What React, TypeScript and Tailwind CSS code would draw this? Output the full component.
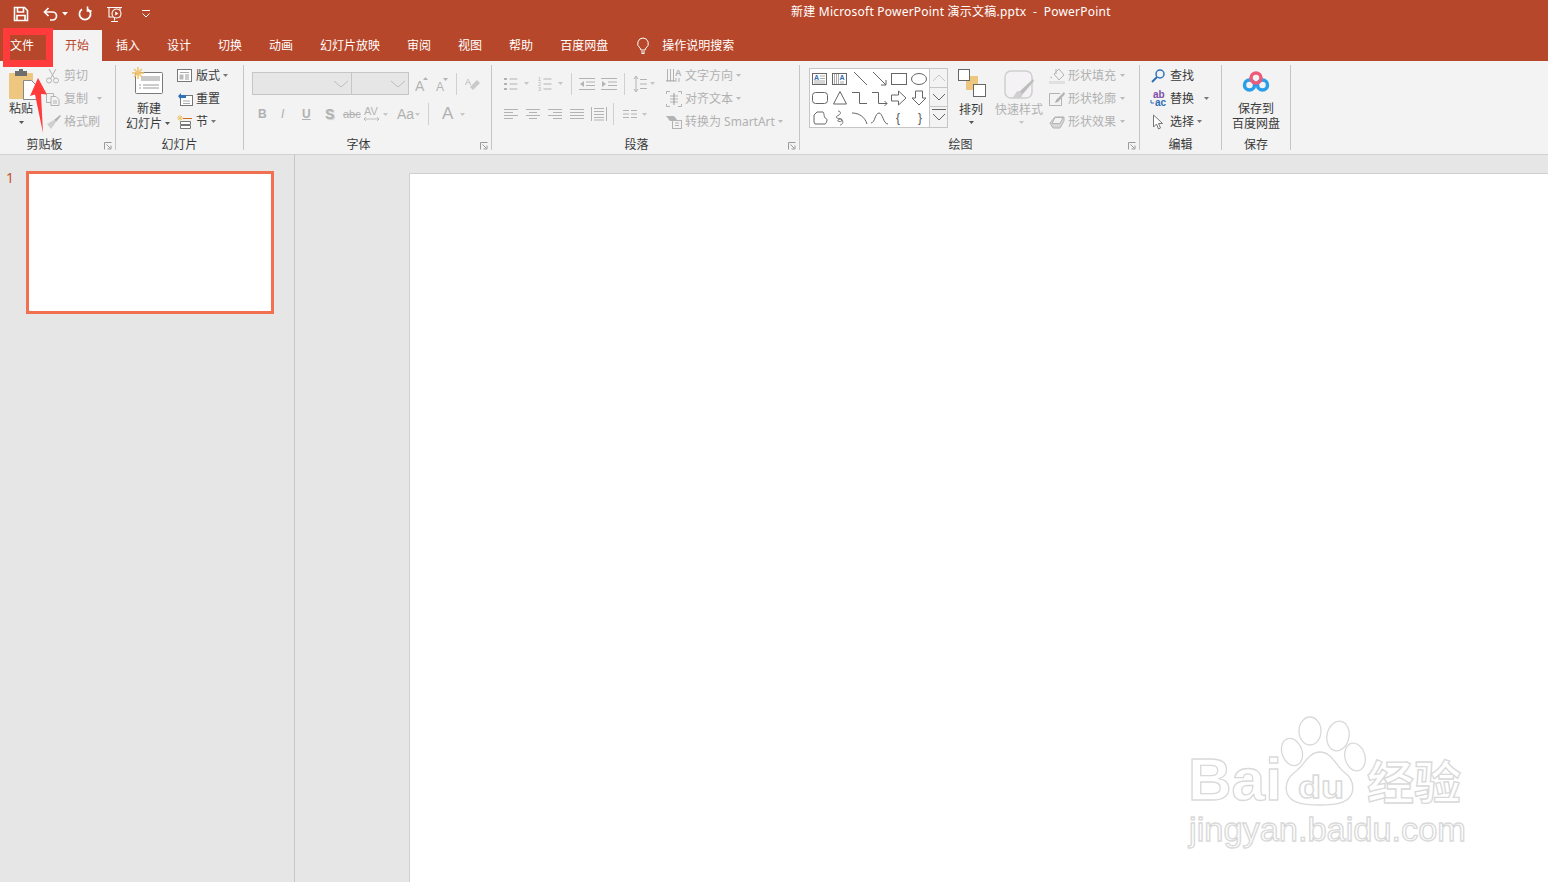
import React from "react";

const G = "#b3b3b3";

function S({ w = 16, h = 16, children, className = "" }: { w?: number; h?: number; children: React.ReactNode; className?: string }) {
  return (
    <svg width={w} height={h} viewBox={`0 0 ${w} ${h}`} fill="none" className={`shrink-0 ${className}`}>
      {children}
    </svg>
  );
}

function Caret({ color = "#777" }: { color?: string }) {
  return (
    <S w={5} h={3}>
      <path d="M0 0h5L2.5 3z" fill={color} />
    </S>
  );
}

function Launcher() {
  return (
    <svg width="8" height="8" viewBox="0 0 8 8" fill="none" className="absolute right-[3px] bottom-[0px]">
      <path d="M.5 7.5v-7h7M2.5 2.5l4 4M7 3.5V7H3.5" stroke="#9a9a9a" strokeWidth="1" />
    </svg>
  );
}

function Group({ w, label, launcher, labelPad = 0, children }: { w: number; label: string; launcher?: boolean; labelPad?: number; children: React.ReactNode }) {
  return (
    <div className="relative flex h-[85px] flex-col border-r border-[#c6c6c6]" style={{ width: w }}>
      <div className="flex h-[73px]">{children}</div>
      <div className="h-[12px] text-center text-[12px] leading-[13px] text-[#3a3a3a]" style={{ paddingRight: labelPad }}>{label}</div>
      {launcher && <Launcher />}
    </div>
  );
}

function SmallRow({ icon, text, caret, muted, gap = 3, caretGap = 3, iconW = 16 }: { icon: React.ReactNode; text: string; caret?: boolean; muted?: boolean; gap?: number; caretGap?: number; iconW?: number }) {
  return (
    <div className={`flex h-[21px] items-center text-[12px] leading-[21px] ${muted ? "text-[#b1b1b1]" : "text-[#3a3a3a]"}`}>
      <div className="flex justify-center" style={{ width: iconW, marginRight: gap }}>{icon}</div>
      <span className="whitespace-nowrap">{text}</span>
      {caret && <div className="flex" style={{ marginLeft: caretGap }}><Caret color={muted ? "#bbb" : "#777"} /></div>}
    </div>
  );
}

function Rows({ children, className = "" }: { children: React.ReactNode; className?: string }) {
  return <div className={`flex flex-col gap-[2px] ${className}`}>{children}</div>;
}

function Sep({ h = 22 }: { h?: number }) {
  return <div className="w-px shrink-0 bg-[#d0d0d0]" style={{ height: h }} />;
}

function Lines({ kind }: { kind: "l" | "c" | "r" | "j" }) {
  const rows = kind === "l" ? [[0, 14], [0, 9], [0, 14], [0, 9]] : kind === "c" ? [[0, 14], [3, 11], [0, 14], [3, 11]] : kind === "r" ? [[0, 14], [5, 14], [0, 14], [5, 14]] : [[0, 14], [0, 14], [0, 14], [0, 14]];
  return (
    <S w={14} h={12}>
      {rows.map((r, i) => (
        <path key={i} d={`M${r[0]} ${1.5 + i * 3}H${r[1]}`} stroke={G} />
      ))}
    </S>
  );
}

const shapes: React.ReactNode[] = [
  <g key="a"><rect x="2.5" y="4.5" width="14" height="11" stroke="#666" /><text x="4" y="10.500" fontSize="7" fontWeight="700" fill="#2f6db5" fontFamily="Liberation Sans">A</text><path d="M10 7h5M10 9.500h5M4 12h11M4 14h11" stroke="#888" strokeWidth=".7" /></g>,
  <g key="b"><rect x="2.5" y="4.5" width="14" height="11" stroke="#666" /><text x="9.500" y="11" fontSize="7" fontWeight="700" fill="#2f6db5" fontFamily="Liberation Sans">A</text><path d="M4.500 5v10M6.500 5v10M8.500 5v10M11 12v3M13 12v3" stroke="#888" strokeWidth=".7" /></g>,
  <path key="c" d="M4 3l13 13" stroke="#666" />,
  <path key="d" d="M3 3l13 13M11 16h5v-5" stroke="#666" />,
  <rect key="e" x="2.500" y="4.500" width="15" height="11" stroke="#666" />,
  <ellipse key="f" cx="10" cy="10" rx="7.500" ry="5.500" stroke="#666" />,
  <rect key="g" x="2.500" y="4.500" width="15" height="11" rx="3" stroke="#666" />,
  <path key="h" d="M10 3.500l6.500 12.500h-13z" stroke="#666" />,
  <path key="i" d="M2 4.500h7.500V15.500H17" stroke="#666" />,
  <path key="j" d="M2 4.500h6.500v11H17M14.500 13l2.500 2.500-2.500 2.500" stroke="#666" />,
  <path key="k" d="M2.500 7h7V3l7.500 7-7.500 7v-4h-7z" stroke="#666" />,
  <path key="l" d="M6.500 3h7v7h3.500l-7 7-7-7h3.500z" stroke="#666" />,
  <path key="m" d="M4 7l3-3h6c1 0 1 5 2 6 1 0 2 1 2 2s-1 4-2 4H5l-1-2z" stroke="#666" />,
  <path key="n" d="M8 3c3 0 3 3 1 4S5 9 7 10s5 0 5 2-3 2-4 1 2-3 4-1 0 5-2 5" stroke="#666" strokeWidth=".9" />,
  <path key="o" d="M2 5c7 0 13 4 15 11" stroke="#666" />,
  <path key="p" d="M1 15c4 0 4-10 8-10s4 11 9 11" stroke="#666" />,
  <text key="q" x="7" y="14" fontSize="12" fill="#555" fontFamily="Liberation Sans">{"{"}</text>,
  <text key="r" x="9" y="14" fontSize="12" fill="#555" fontFamily="Liberation Sans">{"}"}</text>,
];

function Gallery() {
  return (
    <div className="flex h-[60px] w-[139px] border border-[#c6c6c6] bg-white">
      <div className="grid h-full w-[120px] grid-cols-6 grid-rows-3">
        {shapes.map((s, i) => (
          <S key={i} w={20} h={20}>{s}</S>
        ))}
      </div>
      <div className="flex w-[18px] flex-col border-l border-[#c6c6c6] bg-[#f3f3f3]">
        <div className="flex h-[19px] items-center justify-center border-b border-[#c6c6c6]">
          <S w={14} h={8}><path d="M1 7l6-6 6 6" stroke="#c6c6c6" /></S>
        </div>
        <div className="flex h-[19px] items-center justify-center border-b border-[#c6c6c6]">
          <S w={14} h={8}><path d="M1 1l6 6 6-6" stroke="#666" /></S>
        </div>
        <div className="flex flex-1 flex-col items-center pt-[2px]">
          <S w={14} h={14}><path d="M0 .5h14M1 5l6 6 6-6" stroke="#666" /></S>
        </div>
      </div>
    </div>
  );
}

function Watermark() {
  const cls = { fill: "#fff", stroke: "#d9d9d9", strokeWidth: 1.3 };
  return (
    <svg width="310" height="150" viewBox="0 0 310 150" className="pointer-events-none absolute right-[68px] bottom-[22px]">
      <text x="18" y="90" fontSize="60" fontWeight="700" fontFamily="Liberation Sans" lengthAdjust="spacingAndGlyphs" textLength="94" {...cls}>Bai</text>
      <ellipse cx="140" cy="21" rx="11" ry="14" {...cls} />
      <ellipse cx="168" cy="26" rx="11" ry="15" transform="rotate(12 168 26)" {...cls} />
      <ellipse cx="122" cy="42" rx="10" ry="14" transform="rotate(-20 122 42)" {...cls} />
      <ellipse cx="185" cy="47" rx="10" ry="14" transform="rotate(-15 185 47)" {...cls} />
      <path d="M150 42c12 0 16 14 24 20 8 6 10 14 8 21-3 9-13 12-32 12-20 0-30-3-33-12-2-7 0-15 8-21 9-6 13-20 25-20z" {...cls} />
      <text x="128" y="88" fontSize="32" fontWeight="700" fontFamily="Liberation Sans" lengthAdjust="spacingAndGlyphs" textLength="46" {...cls}>du</text>
      <text x="197" y="89" fontSize="46" fontWeight="700" fontFamily="Noto Sans CJK SC" lengthAdjust="spacingAndGlyphs" textLength="94" {...cls}>经验</text>
      <text x="19" y="131" fontSize="33" fontFamily="Liberation Sans" lengthAdjust="spacingAndGlyphs" textLength="277" {...cls}>jingyan.baidu.com</text>
    </svg>
  );
}

const tabs = ["插入", "设计", "切换", "动画", "幻灯片放映", "审阅", "视图", "帮助", "百度网盘"];

function Num() {
  return (
    <S w={16} h={14}>
      {[2, 7, 12].map((y, i) => (
        <g key={y}>
          <text x="1" y={y + 2} fontSize="5.500" fill={G} fontFamily="Liberation Sans">{i + 1}</text>
          <path d={`M6.500 ${y}h8`} stroke={G} />
        </g>
      ))}
    </S>
  );
}

export default function App() {
  return (
    <div className="relative flex h-screen w-full flex-col overflow-hidden bg-[#e6e6e6] font-['Noto_Sans','Noto_Sans_CJK_SC',sans-serif] text-[12px]">
      {/* title bar */}
      <div className="flex h-[30px] shrink-0 items-center bg-[#b7472a] pl-[13px] text-white">
        <S w={16} h={16} className="mr-[14px] -mt-[3px]">
          <path d="M1.500 1.500h10l3 3v10h-13z" stroke="#fff" strokeWidth="1.600" />
          <path d="M4.500 2v4h6V2M4 14.500V9.500h8v5" stroke="#fff" strokeWidth="1.600" />
        </S>
        <S w={16} h={14} className="mr-[3px] -mt-[3px]">
          <path d="M5.500 1L1.500 5l4 4" stroke="#fff" strokeWidth="1.700" />
          <path d="M2 5h7.500a4 4 0 0 1 4 4 4 4 0 0 1-4 4H7" stroke="#fff" strokeWidth="1.700" />
        </S>
        <S w={6} h={4} className="mr-[10px] -mt-[2px]"><path d="M0 0h6L3 3.500z" fill="#fff" /></S>
        <S w={14} h={15} className="mr-[14px] -mt-[3px]">
          <path d="M4 3.200a5.600 5.600 0 1 0 6 0" stroke="#fff" strokeWidth="1.700" />
          <path d="M9.500 .5v4.500h4.200" stroke="#fff" strokeWidth="1.600" />
        </S>
        <S w={18} h={18} className="mr-[17px] -mt-[2px]">
          <path d="M1 2.500h15M3 3v9h11V3M8.500 12v3.500M5 16.500h7" stroke="#fff" strokeWidth="1.100" />
          <circle cx="10.500" cy="8.500" r="4.500" fill="#b7472a" stroke="#fff" strokeWidth="1.100" />
          <path d="M9.200 6.500v4l3.200-2z" fill="#fff" />
        </S>
        <S w={10} h={8} className="-mt-[2px]"><path d="M1 .5h8M1.500 3.500L5 7l3.500-3.500" stroke="#fff" /></S>
        <div className="ml-[640px] -mt-[6px] whitespace-pre text-[12px] leading-[20px] tracking-[0.22px]">新建 Microsoft PowerPoint 演示文稿.pptx  -  PowerPoint</div>
      </div>

      {/* tabs */}
      <div className="flex h-[31px] shrink-0 items-center bg-[#b7472a] text-[12px] text-white">
        <div className="w-[52px] pl-[10px]">文件</div>
        <div className="mr-[14px] flex h-full w-[50px] items-center justify-center bg-[#f3f3f3] text-[#b7472a]">开始</div>
        <div className="flex items-center gap-[27px]">
          {tabs.map((t) => (
            <span key={t} className="whitespace-nowrap">{t}</span>
          ))}
        </div>
        <S w={14} h={17} className="ml-[28px]">
          <path d="M7 1a5.500 5.500 0 0 0-3 10c.6.6.7 1.400.8 2h4.400c.1-.6.2-1.400.8-2A5.500 5.500 0 0 0 7 1z" stroke="#fff" />
          <path d="M5 15h4M5.500 16.500h3" stroke="#fff" />
        </S>
        <span className="ml-[12px]">操作说明搜索</span>
      </div>

      {/* ribbon */}
      <div className="flex h-[94px] shrink-0 border-b border-[#d2d2d2] bg-[#f3f3f3] pt-[4px]">
        <Group w={116} label="剪贴板" launcher labelPad={26}>
          <div className="flex w-[42px] flex-col items-center pt-[3px] text-[#3a3a3a]">
            <svg width="28" height="32" viewBox="0 0 28 32" fill="none" className="ml-[4px] shrink-0">
              <rect x="0" y="5" width="24" height="26" rx="1" fill="#edc67f" />
              <path d="M6 3h12v5H6z" fill="#6e6e6e" />
              <path d="M10 1h4v3h-4z" fill="#6e6e6e" />
              <path d="M14.500 12.500h8l5 5v14h-13z" fill="#fff" stroke="#888" />
            </svg>
            <div className="mt-[1px] leading-[16px]">粘贴</div>
            <div className="mt-[4px]"><Caret color="#555" /></div>
          </div>
          <Rows className="ml-[3px]">
            <SmallRow muted text="剪切" icon={
              <S><circle cx="4" cy="12.500" r="2.500" stroke={G} /><circle cx="11" cy="12.500" r="2.500" stroke={G} /><path d="M5.500 10.500L11 1M9.500 10.500L4 1" stroke={G} /></S>
            } />
            <SmallRow muted text="复制" caret caretGap={9} icon={
              <S><path d="M1.500 2.500h7v9h-7z" stroke={G} /><path d="M6 5.500h5l3 3v6H6z" fill="#f3f3f3" stroke={G} /><path d="M8 10h4M8 12h4" stroke={G} /></S>
            } />
            <SmallRow muted text="格式刷" icon={
              <S><path d="M15 1L9 6l2 2 5-6z" fill={G} /><path d="M9 6L2 10l4 5 5-7z" fill="#cfcfcf" /></S>
            } />
          </Rows>
        </Group>

        <Group w={128} label="幻灯片">
          <div className="flex w-[47px] flex-col items-center pl-[19px] pt-[2px] text-[#3a3a3a]">
            <svg width="32" height="28" viewBox="0 0 32 28" fill="none" className="-ml-[2px] shrink-0">
              <rect x="3.500" y="5.500" width="27" height="21" rx="1" fill="#fff" stroke="#7a7a7a" />
              <path d="M9 9h19v5H9z" fill="#c9c9c9" />
              <path d="M7 18h2M11 18h16M7 21h2M11 21h16" stroke="#9a9a9a" />
              <path d="M6 0v12M0 6h12M2 2l8 8M10 2l-8 8" stroke="#efc26d" strokeWidth="1.500" />
            </svg>
            <div className="mt-[6px] whitespace-nowrap leading-[15px]">新建</div>
            <div className="-ml-[2px] flex items-center whitespace-nowrap leading-[15px]">幻灯片<span className="ml-[3px]"><Caret color="#555" /></span></div>
          </div>
          <Rows className="ml-[14px]">
            <SmallRow text="版式" caret iconW={15} gap={4} icon={
              <S w={15} h={13}><rect x=".5" y=".5" width="14" height="12" fill="#fff" stroke="#777" /><path d="M3 3.500h9" stroke="#aaa" /><rect x="2.500" y="5.500" width="4" height="5" fill="#bbb" /><path d="M8 6h4M8 8h4M8 10h4" stroke="#999" /></S>
            } />
            <SmallRow text="重置" iconW={15} gap={4} icon={
              <S w={16} h={14}><rect x="3.500" y="3.500" width="12" height="10" fill="#fff" stroke="#777" /><path d="M6 9h7M6 11.500h7" stroke="#aaa" /><path d="M1 4l3-3v2h5v3H4v2z" fill="#2f72b8" /></S>
            } />
            <SmallRow text="节" caret iconW={15} gap={4} icon={
              <S w={15} h={14}><path d="M3 0v6M0 3h6M1 1l4 4M5 1L1 5" stroke="#efc26d" /><path d="M6 3.500h9" stroke="#d2691e" /><path d="M3.500 6.500h10v3h-10z M3.500 10.500h10v3h-10z" stroke="#777" fill="#fff" /></S>
            } />
          </Rows>
        </Group>

        <Group w={248} label="字体" launcher labelPad={18}>
          <div className="flex flex-col pl-[8px] pt-[7px]">
            <div className="flex h-[23px] items-center">
              <div className="flex h-[23px] w-[100px] items-center justify-end border border-[#c6c6c6] bg-[#e6e6e6] pr-[3px]">
                <S w={14} h={8}><path d="M0 1l7 6 7-6" stroke="#bcbcbc" /></S>
              </div>
              <div className="flex h-[23px] w-[57px] items-center justify-end border border-l-0 border-[#c6c6c6] bg-[#e6e6e6] pr-[3px]">
                <S w={14} h={8}><path d="M0 1l7 6 7-6" stroke="#bcbcbc" /></S>
              </div>
              <S w={14} h={18} className="ml-[6px]"><text x="0" y="16" fontSize="14" fill={G} fontFamily="Liberation Sans">A</text><path d="M8 5h5L10.500 2z" fill={G} /></S>
              <S w={13} h={18} className="ml-[7px]"><text x="0" y="16" fontSize="12" fill={G} fontFamily="Liberation Sans">A</text><path d="M7 3h5L9.500 6z" fill={G} /></S>
              <div className="ml-[7px]"><Sep /></div>
              <S w={16} h={18} className="ml-[8px]"><path d="M8 15l7-7-3-3-7 7z" fill="#c9c9c9" /><text x="0" y="10" fontSize="9" fill={G} fontFamily="Liberation Sans">A</text></S>
            </div>
            <div className="mt-[8px] flex h-[22px] items-center font-['Liberation_Sans',sans-serif] text-[#b1b1b1]">
              <span className="ml-[6px] w-[22px] text-[12px] font-bold">B</span>
              <span className="ml-[1px] w-[21px] text-[12px] italic">I</span>
              <span className="w-[23px] text-[12px] font-bold underline">U</span>
              <span className="w-[18px] text-[14px] font-bold [text-shadow:1px_1px_1px_#ccc]">S</span>
              <span className="w-[21px] text-[11px] line-through">abc</span>
              <S w={16} h={16}><text x="0" y="9" fontSize="11" fill={G} fontFamily="Liberation Sans">AV</text><path d="M0 13h15M2 11l-2 2 2 2M13 11l2 2-2 2" stroke={G} strokeWidth=".8" /></S>
              <div className="ml-[3px] mr-[9px]"><Caret color="#c5c5c5" /></div>
              <span className="w-[18px] text-[14px]">Aa</span>
              <div className="mr-[8px]"><Caret color="#c5c5c5" /></div>
              <Sep />
              <span className="ml-[13px] w-[18px] text-[17px]">A</span>
              <Caret color="#c5c5c5" />
            </div>
          </div>
        </Group>

        <Group w={308} label="段落" launcher labelPad={18}>
          <div className="flex w-[174px] flex-col pl-[11px] pt-[7px]">
            <div className="flex h-[23px] items-center">
              <S w={16} h={14}>{[2, 7, 12].map((y) => <g key={y}><rect x="1" y={y - 1} width="3" height="2" fill={G} /><path d={`M6.500 ${y}h8`} stroke={G} /></g>)}</S>
              <div className="ml-[5px] mr-[8px]"><Caret color="#c5c5c5" /></div>
              <Num />
              <div className="ml-[5px] mr-[8px]"><Caret color="#c5c5c5" /></div>
              <Sep />
              <S w={16} h={14} className="ml-[7px]"><path d="M0 1.500h16M7 5h9M7 8.500h9M0 12.500h16" stroke={G} /><path d="M5 4v6L1 7z" fill={G} /></S>
              <S w={16} h={14} className="ml-[6px]"><path d="M0 1.500h16M7 5h9M7 8.500h9M0 12.500h16" stroke={G} /><path d="M1 4v6l4-3z" fill={G} /></S>
              <div className="ml-[7px]"><Sep /></div>
              <S w={14} h={18} className="ml-[8px]"><path d="M3 2v14M1 4l2-3 2 3M1 14l2 3 2-3M7 4.500h7M7 9h7M7 13.500h7" stroke={G} /></S>
              <div className="ml-[3px]"><Caret color="#c5c5c5" /></div>
            </div>
            <div className="mt-[8px] flex h-[22px] items-center">
              <div className="ml-[1px]"><Lines kind="l" /></div>
              <div className="ml-[8px]"><Lines kind="c" /></div>
              <div className="ml-[8px]"><Lines kind="r" /></div>
              <div className="ml-[8px]"><Lines kind="j" /></div>
              <S w={16} h={16} className="ml-[7px]"><path d="M.5 1v14M15.500 1v14M3 2.500h10M3 5.500h10M3 8.500h10M3 11.500h10M3 14h10" stroke={G} /></S>
              <div className="ml-[6px]"><Sep /></div>
              <S w={14} h={10} className="ml-[9px]"><path d="M0 1.500h6M8 1.500h6M0 5h6M8 5h6M0 8.500h6M8 8.500h6" stroke={G} /></S>
              <div className="ml-[5px]"><Caret color="#c5c5c5" /></div>
            </div>
          </div>
          <Rows>
            <SmallRow muted text="文字方向" caret icon={
              <S><path d="M1.500 1v12M4.500 1v12M7.500 1v12M0 12l1.500 2 1.500-2M3 12l1.500 2 1.500-2M6 12l1.500 2 1.500-2" stroke={G} /><text x="9" y="8" fontSize="9" fontWeight="700" fill={G} fontFamily="Liberation Sans">A</text><path d="M10 10v4M13 10v4" stroke={G} /></S>
            } />
            <SmallRow muted text="对齐文本" caret icon={
              <S><path d="M.5 3V.500H4M12 .5h3.500V3M.5 13v2.500H4M12 15.500h3.500V13" stroke={G} /><path d="M4 5h8M4 8h8M4 11h8" stroke={G} /><path d="M8 2v12" stroke="#999" /></S>
            } />
            <SmallRow muted text="转换为 SmartArt" caret icon={
              <S><path d="M0 2h8l4 5H4z" fill={G} /><rect x="6.500" y="6.500" width="9" height="8" fill="#f3f3f3" stroke={G} /><path d="M9 9h4M9 11.500h4" stroke={G} /></S>
            } />
          </Rows>
        </Group>

        <Group w={340} label="绘图" launcher labelPad={18}>
          <div className="ml-[9px] mt-[3px]"><Gallery /></div>
          <div className="ml-[9px] flex w-[28px] flex-col items-center pt-[4px] text-[#3a3a3a]">
            <svg width="28" height="28" viewBox="0 0 28 28" fill="none" className="ml-[1px] shrink-0">
              <rect x="8" y="7" width="12" height="14" fill="#edc67f" />
              <rect x=".5" y=".5" width="11" height="11" fill="#fff" stroke="#666" />
              <rect x="15.500" y="15.500" width="12" height="12" fill="#fff" stroke="#666" />
            </svg>
            <div className="mt-[5px] whitespace-nowrap leading-[16px]">排列</div>
            <div className="mt-[3px]"><Caret color="#555" /></div>
          </div>
          <div className="ml-[9px] flex w-[50px] flex-col items-center pt-[5px] text-[#b1b1b1]">
            <svg width="30" height="29" viewBox="0 0 30 29" fill="none" className="shrink-0">
              <rect x="1" y="1" width="27" height="27" rx="6" fill="#f5f2f5" stroke="#cfcfcf" strokeWidth="1.500" />
              <path d="M29 9L15 22l3 3 12-14z" fill="#bdbdbd" />
              <path d="M14 21c-3 1-3 6-7 7h9c2-1 3-4 2-5z" fill="#cfcfcf" />
            </svg>
            <div className="mt-[3px] whitespace-nowrap leading-[16px]">快速样式</div>
            <div className="ml-[5px] mt-[3px]"><Caret color="#c5c5c5" /></div>
          </div>
          <Rows className="ml-[5px]">
            <SmallRow muted text="形状填充" caret gap={3} caretGap={4} icon={
              <S><path d="M5 6l5-5 5 6-5 5z" fill="none" stroke={G} /><path d="M7 1v5" stroke={G} /><path d="M2 8c-1 2 0 3 1 2z" fill={G} /><rect x="0" y="13" width="16" height="3" fill="#e0e0e0" /></S>
            } />
            <SmallRow muted text="形状轮廓" caret gap={3} caretGap={4} icon={
              <S><path d="M11 2.500H.5v12h12V7" stroke={G} /><path d="M15 1L7 9l-1 3 3-1 7-8z" fill={G} /></S>
            } />
            <SmallRow muted text="形状效果" caret gap={3} caretGap={4} icon={
              <S><path d="M1 9l5-6h9v4l-4 7H4z" fill="#d7d7d7" stroke={G} /><path d="M6 3.500h8l-3 6H3z" fill="#f3f3f3" stroke={G} /></S>
            } />
          </Rows>
        </Group>

        <Group w={82} label="编辑">
          <Rows className="ml-[10px]">
            <SmallRow text="查找" icon={
              <S><circle cx="10" cy="6" r="4" stroke="#2f72b8" strokeWidth="1.500" /><path d="M7 9l-5 5" stroke="#2f72b8" strokeWidth="2" /></S>
            } gap={4} />
            <SmallRow text="替换" caret caretGap={10} gap={4} icon={
              <S h={19}><text x="3" y="9" fontSize="10" fontWeight="700" fill="#7d4ea8" fontFamily="Liberation Sans">ab</text><text x="5" y="17" fontSize="10" fontWeight="700" fill="#2f6db5" fontFamily="Liberation Sans">ac</text><path d="M1 11v3h3" stroke="#2f72b8" /></S>
            } />
            <SmallRow text="选择" caret gap={4} icon={
              <S><path d="M3.500 1v12l3-3 2 5 2-1-2-4.500h4z" fill="#fff" stroke="#777" /></S>
            } />
          </Rows>
        </Group>

        <Group w={69} label="保存">
          <div className="flex w-full flex-col items-center pt-[6px] text-[#3a3a3a]">
            <svg width="28" height="22" viewBox="0 0 28 22" fill="none" className="shrink-0">
              <circle cx="7.500" cy="14" r="5" stroke="#2a9ee8" strokeWidth="3.500" />
              <circle cx="20.500" cy="14" r="5" stroke="#2a9ee8" strokeWidth="3.500" />
              <circle cx="14" cy="7" r="5" stroke="#ef5a7a" strokeWidth="3.500" />
            </svg>
            <div className="mt-[8px] whitespace-nowrap leading-[15px]">保存到</div>
            <div className="whitespace-nowrap leading-[15px]">百度网盘</div>
          </div>
        </Group>
      </div>

      {/* body */}
      <div className="flex min-h-0 flex-1">
        <div className="flex w-[295px] shrink-0 border-r border-[#c6c6c6] pt-[16px]">
          <div className="w-[26px] pl-[6px] text-[14px] leading-[14px] text-[#c8502d]">1</div>
          <div className="h-[143px] w-[248px] border-[3px] border-[#f1704f] bg-white" />
        </div>
        <div className="flex-1 pl-[114px] pt-[18px]">
          <div className="h-full border-l border-t border-[#d0d0d0] bg-white" />
        </div>
      </div>

      {/* annotations */}
      <div className="pointer-events-none absolute left-[3px] top-[28px] h-[39px] w-[50px] border-[7px] border-[#ff3b3b]" />
      <svg width="24" height="60" viewBox="0 0 24 60" className="pointer-events-none absolute left-[28px] top-[76px]">
        <path d="M10 2L2 20l5-1.500L15 57l-2-39 6 .5z" fill="#ff3b3b" />
      </svg>
      <Watermark />
    </div>
  );
}
